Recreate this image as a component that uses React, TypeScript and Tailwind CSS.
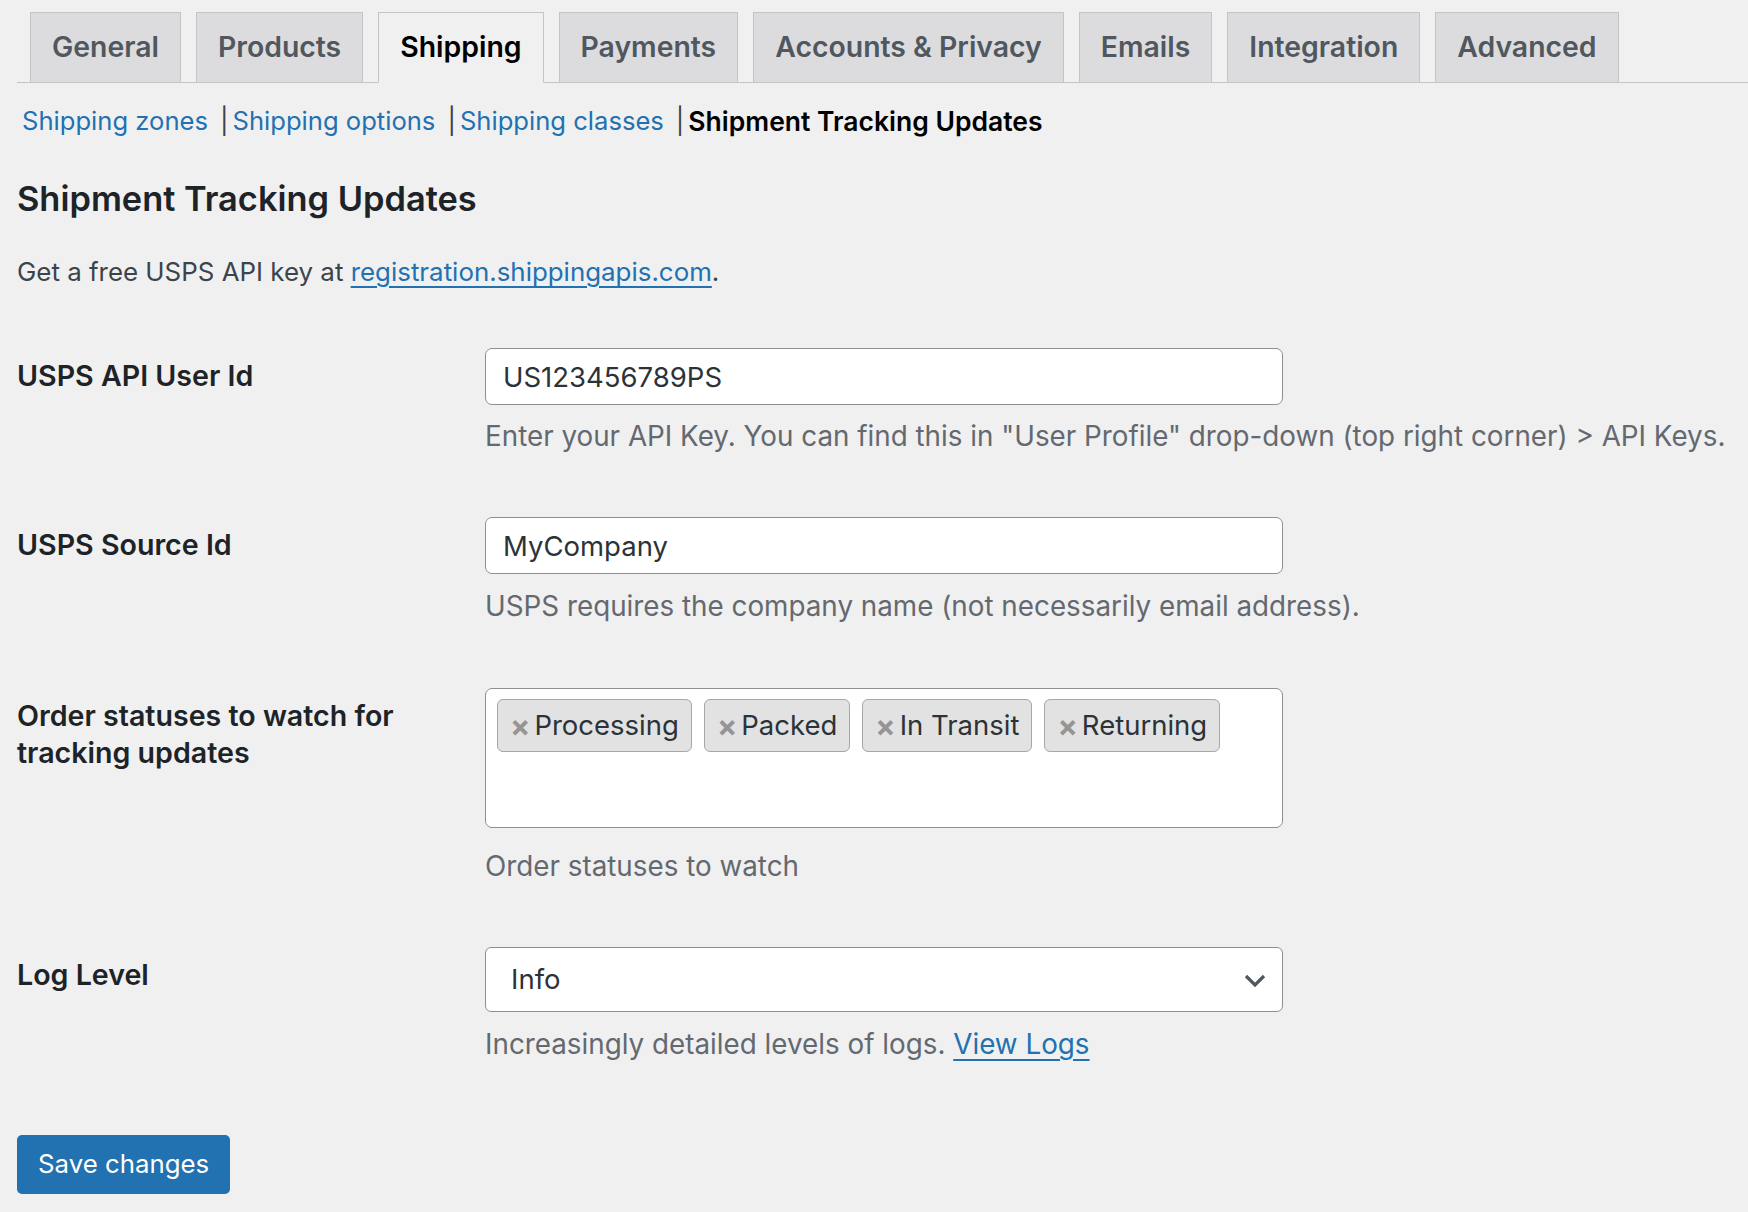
import { useState } from "react";

type Tab = { label: string; active?: boolean };

const tabs: Tab[] = [
  { label: "General" },
  { label: "Products" },
  { label: "Shipping", active: true },
  { label: "Payments" },
  { label: "Accounts & Privacy" },
  { label: "Emails" },
  { label: "Integration" },
  { label: "Advanced" },
];

const sections = ["Shipping zones", "Shipping options", "Shipping classes"];

function Label({ children }: { children: React.ReactNode }) {
  return (
    <div className="pt-[9px] text-[28.6px] leading-[37px] font-semibold text-[#1d2327]">
      {children}
    </div>
  );
}

function Desc({ children, className = "" }: { children: React.ReactNode; className?: string }) {
  return (
    <p className={"text-[27.8px] leading-[36px] text-[#646970] whitespace-nowrap " + className}>
      {children}
    </p>
  );
}

export default function App() {
  const [statuses, setStatuses] = useState(["Processing", "Packed", "In Transit", "Returning"]);
  const [userId, setUserId] = useState("US123456789PS");
  const [sourceId, setSourceId] = useState("MyCompany");

  return (
    <div className="min-h-[1212px] bg-[#f0f0f1] font-['Inter',sans-serif] text-[#3c434a] pl-[17px] pt-[12px]">
      {/* tabs */}
      <nav className="flex items-end border-b border-[#c3c4c7] pl-[13px] gap-[15px]">
        {tabs.map((t) => (
          <a
            key={t.label}
            className={
              "-mb-px h-[71px] flex items-center px-[21px] border text-[28.4px] font-semibold " +
              (t.active
                ? "bg-[#f0f0f1] border-[#c3c4c7] border-b-[#f0f0f1] text-black"
                : "bg-[#dcdcde] border-[#c3c4c7] text-[#50575e]")
            }
          >
            {t.label}
          </a>
        ))}
      </nav>

      {/* sub sections */}
      <div className="mt-[20px] pl-[5px] flex items-center text-[25.6px] leading-[36px]">
        {sections.map((s) => (
          <span key={s} className="flex items-center">
            <a className="text-[#2271b1]">{s}</a>
            <span className="ml-[12px] mr-[4px] text-[#3c434a]">|</span>
          </span>
        ))}
        <span className="font-semibold text-black text-[26.5px]">Shipment Tracking Updates</span>
      </div>

      <h2 className="mt-[40px] text-[34.4px] leading-[40px] font-semibold text-[#1d2327]">
        Shipment Tracking Updates
      </h2>

      <p className="mt-[35px] text-[25.9px] leading-[36px] text-[#3c434a]">
        Get a free USPS API key at{" "}
        <a className="text-[#2271b1] underline underline-offset-[5px]">registration.shippingapis.com</a>.
      </p>

      <div className="mt-[58px] grid grid-cols-[468px_1fr]">
        {/* user id */}
        <Label>USPS API User Id</Label>
        <div>
          <input
            value={userId}
            onChange={(e) => setUserId(e.target.value)}
            className="w-[798px] h-[57px] bg-white border-[1.5px] border-[#8c8f94] rounded-[7px] px-[17px] text-[27.5px] text-[#2c3338] outline-none"
          />
          <Desc className="mt-[13px]">
            Enter your API Key. You can find this in "User Profile" drop-down (top right corner) &gt; API Keys.
          </Desc>
        </div>

        {/* source id */}
        <div className="mt-[63px]">
          <Label>USPS Source Id</Label>
        </div>
        <div className="mt-[63px]">
          <input
            value={sourceId}
            onChange={(e) => setSourceId(e.target.value)}
            className="w-[798px] h-[57px] bg-white border-[1.5px] border-[#8c8f94] rounded-[7px] px-[17px] text-[27.5px] text-[#2c3338] outline-none"
          />
          <Desc className="mt-[14px]">USPS requires the company name (not necessarily email address).</Desc>
        </div>

        {/* statuses */}
        <div className="mt-[64px] pr-[40px]">
          <Label>Order statuses to watch for tracking updates</Label>
        </div>
        <div className="mt-[64px]">
          <div className="w-[798px] h-[140px] bg-white border-[1.5px] border-[#8c8f94] rounded-[7px] pl-[11px] pt-[10px] flex flex-wrap items-start gap-[12px]">
            {statuses.map((s) => (
              <span
                key={s}
                className="h-[53px] flex items-center gap-[4px] bg-[#e2e2e2] border-[1.5px] border-[#a7a7a7] rounded-[6px] pl-[12px] pr-[12px] text-[27.5px] text-[#2c3338]"
              >
                <button
                  onClick={() => setStatuses(statuses.filter((x) => x !== s))}
                  className="text-[30px] font-bold text-[#959595] leading-none"
                >
                  ×
                </button>
                {s}
              </span>
            ))}
          </div>
          <Desc className="mt-[20px]">Order statuses to watch</Desc>
        </div>

        {/* log level */}
        <div className="mt-[63px]">
          <Label>Log Level</Label>
        </div>
        <div className="mt-[63px]">
          <div className="w-[798px] h-[65px] bg-white border-[1.5px] border-[#8c8f94] rounded-[6px] pl-[25px] pr-[15px] flex items-center justify-between text-[27.5px] text-[#2c3338]">
            <span>Info</span>
            <svg width="24" height="16" viewBox="0 0 24 16" fill="none">
              <path d="M3 4l9 9 9-9" stroke="#50575e" strokeWidth="3.2" />
            </svg>
          </div>
          <Desc className="mt-[14px]">
            Increasingly detailed levels of logs.{" "}
            <a className="text-[#2271b1] underline underline-offset-[5px]">View Logs</a>
          </Desc>
        </div>
      </div>

      <button className="mt-[73px] h-[59px] px-[21px] bg-[#2271b1] rounded-[5px] text-white text-[25.8px]">
        Save changes
      </button>
    </div>
  );
}
